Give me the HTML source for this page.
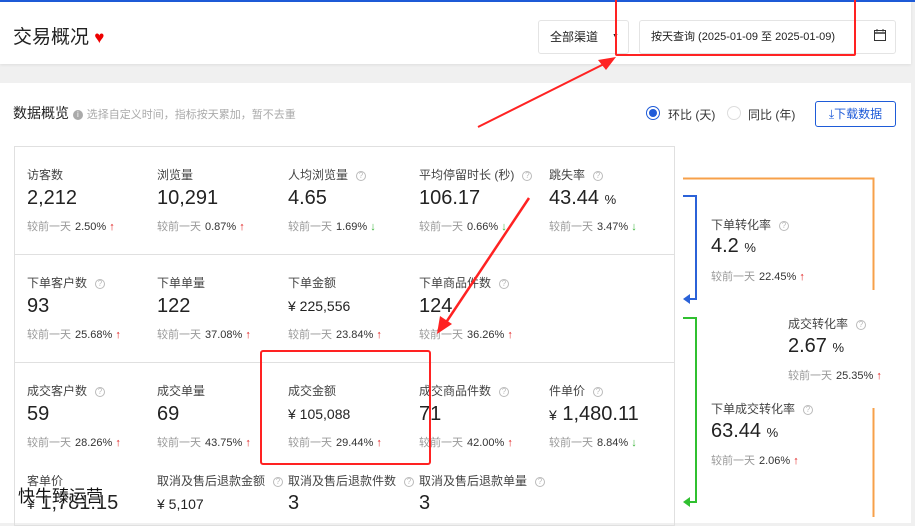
<!DOCTYPE html>
<html><head><meta charset="utf-8"><style>
*{margin:0;padding:0;box-sizing:border-box}
body{width:915px;height:517px;overflow:hidden;background:#f0f0f0;font-family:"Liberation Sans","Noto Sans CJK SC",sans-serif;position:relative;color:#333}
.a{position:absolute;white-space:nowrap}
.lab{font-size:12px;color:#444}
.val{font-size:20px;color:#222}
.val small{font-size:13px}
.cmp{font-size:11px;color:#999}
.cmp b{font-weight:normal;color:#333;margin-left:4px}
.up{color:#e02020;font-weight:bold}
.dn{color:#3bb53b;font-weight:bold}
.q{display:inline-block;width:10px;height:10px;border:1px solid #bbb;border-radius:50%;font-size:8px;line-height:8px;text-align:center;color:#bbb;margin-left:8px;vertical-align:1px}
.hl{position:absolute;height:1px;background:#e0e0e0}
</style></head><body>
<div class="a" style="left:0;top:0;width:915px;height:2px;background:#1e5bd8"></div>
<div class="a" style="left:0;top:2px;width:911px;height:62px;background:#fff;box-shadow:0 1px 3px rgba(0,0,0,.08)"></div>
<div class="a" style="left:13px;top:22px;font-size:19px;color:#222">交易概况 <span style="color:#e00;font-size:17px">♥</span></div>
<div class="a" style="left:538px;top:20px;width:91px;height:34px;border:1px solid #e4e4e4;border-radius:3px;font-size:12px;line-height:32px;padding-left:11px;color:#222">全部渠道 <span style="position:absolute;left:73px;top:0;font-size:7px">▼</span></div>
<div class="a" style="left:639px;top:20px;width:257px;height:34px;border:1px solid #e4e4e4;border-radius:3px;font-size:11px;line-height:32px;padding-left:11px;color:#222">按天查询 (2025-01-09 至 2025-01-09)</div>
<svg class="a" style="left:873px;top:28px" width="14" height="14" viewBox="0 0 14 14"><rect x="1.5" y="2.5" width="11" height="10" fill="none" stroke="#333"/><line x1="1.5" y1="5" x2="12.5" y2="5" stroke="#333" stroke-width="1.5"/><line x1="4" y1="1" x2="4" y2="3.5" stroke="#333"/><line x1="10" y1="1" x2="10" y2="3.5" stroke="#333"/></svg>
<div class="a" style="left:615px;top:-2px;width:241px;height:58px;border:2px solid #f22;border-radius:2px"></div>

<div class="a" style="left:0;top:83px;width:911px;height:440px;background:#fff"></div>
<div class="a" style="left:13px;top:103px;font-size:14px;color:#222">数据概览 <span style="display:inline-block;width:10px;height:10px;border-radius:50%;background:#aaa;color:#fff;font-size:8px;line-height:10px;text-align:center;vertical-align:1px">i</span> <span style="font-size:11px;color:#aaa">选择自定义时间，指标按天累加，暂不去重</span></div>
<div class="a" style="left:646px;top:106px;width:14px;height:14px;border-radius:50%;border:1px solid #1e5bd8"><div style="margin:2px;width:8px;height:8px;border-radius:50%;background:#1e5bd8"></div></div>
<div class="a" style="left:668px;top:106px;font-size:12px;color:#333">环比 (天)</div>
<div class="a" style="left:727px;top:106px;width:14px;height:14px;border-radius:50%;border:1px solid #ddd"></div>
<div class="a" style="left:748px;top:106px;font-size:12px;color:#333">同比 (年)</div>
<div class="a" style="left:815px;top:101px;width:81px;height:26px;border:1px solid #1e5bd8;border-radius:3px;font-size:12px;line-height:24px;color:#1e5bd8;text-align:center">⤓下载数据</div>

<div class="a" style="left:14px;top:146px;width:661px;height:380px;border:1px solid #e0e0e0"></div>
<div class="hl" style="left:14px;top:254px;width:661px"></div>
<div class="hl" style="left:14px;top:362px;width:661px"></div>

<!-- row 1 -->
<div class="a lab" style="left:27px;top:166px">访客数</div>
<div class="a val" style="left:27px;top:187px">2,212</div>
<div class="a cmp" style="left:27px;top:218px">较前一天<b>2.50%</b> <span class="up">↑</span></div>
<div class="a lab" style="left:157px;top:166px">浏览量</div>
<div class="a val" style="left:157px;top:187px">10,291</div>
<div class="a cmp" style="left:157px;top:218px">较前一天<b>0.87%</b> <span class="up">↑</span></div>
<div class="a lab" style="left:288px;top:166px">人均浏览量<span class="q">?</span></div>
<div class="a val" style="left:288px;top:187px">4.65</div>
<div class="a cmp" style="left:288px;top:218px">较前一天<b>1.69%</b> <span class="dn">↓</span></div>
<div class="a lab" style="left:419px;top:166px">平均停留时长 (秒)<span class="q">?</span></div>
<div class="a val" style="left:419px;top:187px">106.17</div>
<div class="a cmp" style="left:419px;top:218px">较前一天<b>0.66%</b> <span class="dn">↓</span></div>
<div class="a lab" style="left:549px;top:166px">跳失率<span class="q">?</span></div>
<div class="a val" style="left:549px;top:187px">43.44 <small>%</small></div>
<div class="a cmp" style="left:549px;top:218px">较前一天<b>3.47%</b> <span class="dn">↓</span></div>
<!-- row 2 -->
<div class="a lab" style="left:27px;top:274px">下单客户数<span class="q">?</span></div>
<div class="a val" style="left:27px;top:295px">93</div>
<div class="a cmp" style="left:27px;top:326px">较前一天<b>25.68%</b> <span class="up">↑</span></div>
<div class="a lab" style="left:157px;top:274px">下单单量</div>
<div class="a val" style="left:157px;top:295px">122</div>
<div class="a cmp" style="left:157px;top:326px">较前一天<b>37.08%</b> <span class="up">↑</span></div>
<div class="a lab" style="left:288px;top:274px">下单金额</div>
<div class="a" style="left:288px;top:298px;font-size:14px;color:#222">¥ 225,556</div>
<div class="a cmp" style="left:288px;top:326px">较前一天<b>23.84%</b> <span class="up">↑</span></div>
<div class="a lab" style="left:419px;top:274px">下单商品件数<span class="q">?</span></div>
<div class="a val" style="left:419px;top:295px">124</div>
<div class="a cmp" style="left:419px;top:326px">较前一天<b>36.26%</b> <span class="up">↑</span></div>
<!-- row 3 -->
<div class="a lab" style="left:27px;top:382px">成交客户数<span class="q">?</span></div>
<div class="a val" style="left:27px;top:403px">59</div>
<div class="a cmp" style="left:27px;top:434px">较前一天<b>28.26%</b> <span class="up">↑</span></div>
<div class="a lab" style="left:157px;top:382px">成交单量</div>
<div class="a val" style="left:157px;top:403px">69</div>
<div class="a cmp" style="left:157px;top:434px">较前一天<b>43.75%</b> <span class="up">↑</span></div>
<div class="a lab" style="left:288px;top:382px">成交金额</div>
<div class="a" style="left:288px;top:406px;font-size:14px;color:#222">¥ 105,088</div>
<div class="a cmp" style="left:288px;top:434px">较前一天<b>29.44%</b> <span class="up">↑</span></div>
<div class="a lab" style="left:419px;top:382px">成交商品件数<span class="q">?</span></div>
<div class="a val" style="left:419px;top:403px">71</div>
<div class="a cmp" style="left:419px;top:434px">较前一天<b>42.00%</b> <span class="up">↑</span></div>
<div class="a lab" style="left:549px;top:382px">件单价<span class="q">?</span></div>
<div class="a val" style="left:549px;top:403px"><span style="font-size:14px">¥</span> 1,480.11</div>
<div class="a cmp" style="left:549px;top:434px">较前一天<b>8.84%</b> <span class="dn">↓</span></div>
<!-- row 4 -->
<div class="a lab" style="left:27px;top:472px">客单价</div>
<div class="a val" style="left:27px;top:492px"><span style="font-size:14px">¥</span> 1,781.15</div>
<div class="a lab" style="left:157px;top:472px">取消及售后退款金额<span class="q">?</span></div>
<div class="a" style="left:157px;top:496px;font-size:14px;color:#222">¥ 5,107</div>
<div class="a lab" style="left:288px;top:472px">取消及售后退款件数<span class="q">?</span></div>
<div class="a val" style="left:288px;top:492px">3</div>
<div class="a lab" style="left:419px;top:472px">取消及售后退款单量<span class="q">?</span></div>
<div class="a val" style="left:419px;top:492px">3</div>
<div class="a" style="left:18px;top:482px;font-size:17px;color:#111;text-shadow:0 0 2px #fff,0 0 2px #fff">快牛臻运营</div>

<!-- red box -->
<div class="a" style="left:260px;top:350px;width:171px;height:115px;border:2px solid #f22;border-radius:3px"></div>

<!-- right side -->
<svg class="a" style="left:0;top:0" width="915" height="517">
<polyline points="683,178.5 873.5,178.5 873.5,290" fill="none" stroke="#f7a04a" stroke-width="2"/>
<line x1="873.5" y1="408" x2="873.5" y2="517" stroke="#f7a04a" stroke-width="2"/>
<polyline points="683,196 696,196 696,299 686,299" fill="none" stroke="#2b62d8" stroke-width="2"/>
<polygon points="683,299 690,294 690,304" fill="#2b62d8"/>
<polyline points="683,318 696,318 696,502 686,502" fill="none" stroke="#30c030" stroke-width="2"/>
<polygon points="683,502 690,497 690,507" fill="#30c030"/>
<line x1="478" y1="127" x2="608" y2="62" stroke="#f22" stroke-width="2"/>
<polygon points="616,57 598,60 606,70" fill="#f22"/>
<line x1="529" y1="198" x2="443" y2="327" stroke="#f22" stroke-width="2.5"/>
<polygon points="437,334 440,316 452,324" fill="#f22"/>
</svg>
<div class="a lab" style="left:711px;top:216px">下单转化率<span class="q">?</span></div>
<div class="a val" style="left:711px;top:235px">4.2 <small>%</small></div>
<div class="a cmp" style="left:711px;top:268px">较前一天<b>22.45%</b> <span class="up">↑</span></div>
<div class="a lab" style="left:788px;top:315px">成交转化率<span class="q">?</span></div>
<div class="a val" style="left:788px;top:335px">2.67 <small>%</small></div>
<div class="a cmp" style="left:788px;top:367px">较前一天<b>25.35%</b> <span class="up">↑</span></div>
<div class="a lab" style="left:711px;top:400px">下单成交转化率<span class="q">?</span></div>
<div class="a val" style="left:711px;top:420px">63.44 <small>%</small></div>
<div class="a cmp" style="left:711px;top:452px">较前一天<b>2.06%</b> <span class="up">↑</span></div>
</body></html>
